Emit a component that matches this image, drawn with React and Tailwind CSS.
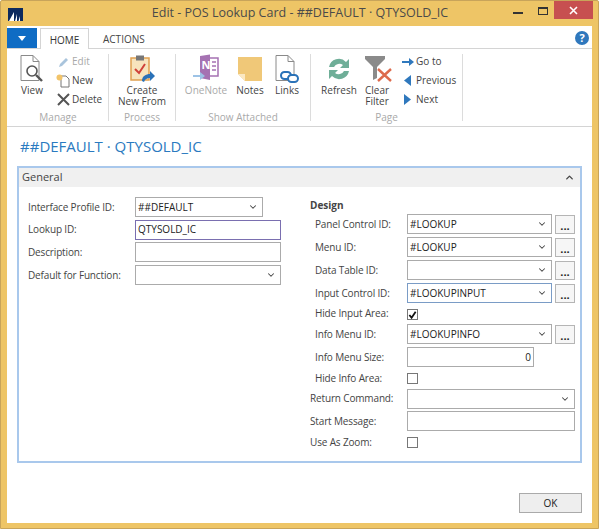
import { ChevronDown, ChevronUp } from 'lucide-react'

const font = { fontFamily: '"Open Sans", "Noto Sans", sans-serif' }

function Combo({ value, width = 'w-[145px]', active }) {
    return (
        <div
            className={`${width} h-[20px] flex items-center justify-between border bg-white pl-[2px] pr-[4px] text-[10px] text-[#222] ${
                active ? 'border-[#7a9cc6]' : 'border-[#ababab]'
            }`}
        >
            <span>{value}</span>
            <ChevronDown size={10} strokeWidth={2.5} className="text-[#444]" />
        </div>
    )
}

function TextBox({ value, width = 'w-[146px]', right, active }) {
    return (
        <div
            className={`${width} h-[20px] flex items-center border bg-white px-[2px] text-[10px] text-[#222] ${
                right ? 'justify-end pr-[2px]' : ''
            } ${active ? 'border-[#7a6fb0]' : 'border-[#ababab]'}`}
        >
            {value}
        </div>
    )
}

function DotsButton() {
    return (
        <div className="w-[20px] h-[19px] mt-[1px] flex items-end justify-center border border-[#b5b5b5] bg-[#f6f6f6] text-[11px] leading-[14px] font-bold text-[#222]">
            ...
        </div>
    )
}

function CheckBox({ checked, className = '' }) {
    return (
        <div className={`w-[11px] h-[11px] flex items-center justify-center border border-[#777] bg-white ${className}`}>
            {checked && (
                <svg width="10" height="10" viewBox="0 0 10 10">
                    <path d="M1.5 5 L4 8 L8.5 1.5" fill="none" stroke="#111" strokeWidth="2" />
                </svg>
            )}
        </div>
    )
}

function LeftRow({ label, children }) {
    return (
        <div className="h-[22.6px] flex items-center">
            <span className="w-[107px] text-[10px] tracking-[-0.15px] text-[#444]">{label}</span>
            {children}
        </div>
    )
}

function RightRow({ label, children, indent = true, dots, height = 'h-[23px]' }) {
    return (
        <div className={`${height} flex items-center`}>
            <span className={`w-[97px] text-[10px] tracking-[-0.15px] text-[#444] ${indent ? 'pl-[5px]' : ''}`}>
                {label}
            </span>
            {children}
            {dots && (
                <div className="ml-[3px]">
                    <DotsButton />
                </div>
            )}
        </div>
    )
}

function SmallAction({ icon, label, disabled }) {
    return (
        <div className={`h-[19px] flex items-center gap-[1px] text-[10px] ${disabled ? 'text-[#a9a9a9]' : 'text-[#444]'}`}>
            <span className="w-[15px] h-[15px] flex items-center justify-center">{icon}</span>
            <span>{label}</span>
        </div>
    )
}

function BigAction({ icon, label, disabled, width }) {
    return (
        <div className={`${width} flex flex-col items-center text-[10px] leading-[11px] text-center ${disabled ? 'text-[#a9a9a9]' : 'text-[#444]'}`}>
            <div className="h-[30px] flex items-center justify-center">{icon}</div>
            <div className="mt-[1px]">{label}</div>
        </div>
    )
}

function Group({ width, label, children }) {
    return (
        <div className={`${width} h-[67px] flex flex-col border-r border-[#dcdcdc]`}>
            <div className="flex-1 flex">{children}</div>
            <div className="text-center text-[10px] leading-[12px] text-[#a9a9a9] mb-[-2px]">{label}</div>
        </div>
    )
}

const ViewIcon = (
    <svg width="26" height="30" viewBox="0 0 26 30">
        <path d="M2 1.5 H14 L20 7.5 V26.5 H2 Z M14 1.5 V7.5 H20" fill="#fff" stroke="#8a8a8a" />
        <circle cx="13" cy="17" r="5" fill="#fff" stroke="#555" strokeWidth="1.6" />
        <path d="M17 21 L23 27" stroke="#555" strokeWidth="2.4" />
    </svg>
)
const ClipboardIcon = (
    <svg width="26" height="30" viewBox="0 0 26 30">
        <rect x="2" y="4" width="18" height="22" fill="#f7e4bd" stroke="#e0a050" strokeWidth="1.5" />
        <rect x="7" y="1.5" width="8" height="5" fill="#777" />
        <path d="M6 15 L10 19 L16 10" fill="none" stroke="#d0423a" strokeWidth="2" />
        <path d="M13 27 C13 22 17 20 21 20 V17 L26 22 L21 27 V24 C18 24 16 25 15 28 Z" fill="#2a72b8" />
    </svg>
)
const OneNoteIcon = (
    <svg width="28" height="30" viewBox="0 0 28 30">
        <path d="M8 2 L18 0.5 V26 L8 24 Z" fill="#a572b2" />
        <path d="M18 4 H26 V22 H18" fill="none" stroke="#a572b2" strokeWidth="1.5" />
        <path d="M20 8 H24 M20 12 H24 M20 16 H24" stroke="#a572b2" strokeWidth="1.5" />
        <text x="9.5" y="15" fontSize="11" fontWeight="700" fill="#fff">N</text>
        <path d="M1 21 H8 V18 L13 22 L8 26 V23 H1 Z" fill="#9dc3e6" />
    </svg>
)
const NotesIcon = (
    <svg width="26" height="26" viewBox="0 0 26 26">
        <path d="M1 1 H25 V25 H8 L1 18 Z" fill="#f0c878" />
        <path d="M1 18 H8 V25 Z" fill="#fbe8c2" />
    </svg>
)
const LinksIcon = (
    <svg width="26" height="30" viewBox="0 0 26 30">
        <path d="M2 1.5 H14 L20 7.5 V26.5 H2 Z M14 1.5 V7.5 H20" fill="#fff" stroke="#8a8a8a" />
        <rect x="7" y="18" width="10" height="7" rx="3.5" fill="#fff" stroke="#2a72b8" strokeWidth="2" />
        <rect x="14" y="21" width="10" height="7" rx="3.5" fill="#fff" stroke="#2a72b8" strokeWidth="2" />
    </svg>
)
const RefreshIcon = (
    <svg width="26" height="26" viewBox="0 0 26 26">
        <path d="M3 11 A10 10 0 0 1 20 6 L23 3 V12 H14 L17 9 A6 6 0 0 0 8 11 Z" fill="#6fae98" />
        <path d="M23 15 A10 10 0 0 1 6 20 L3 23 V14 H12 L9 17 A6 6 0 0 0 18 15 Z" fill="#6fae98" />
    </svg>
)
const ClearFilterIcon = (
    <svg width="30" height="30" viewBox="0 0 30 30">
        <path d="M3 2 H23 V5 L15 13 V24 L11 26 V13 L3 5 Z" fill="#8a8a8a" />
        <path d="M16 15 L29 27 M29 15 L16 27" stroke="#dd6b4d" strokeWidth="2.4" />
    </svg>
)

export default function App() {
    return (
        <div className="w-[600px] h-[530px] bg-white" style={font}>
            <div className="w-[599px] h-[529px] flex flex-col bg-[#eec566] border border-[#c8a45a] rounded-t-[2px]">
                <div className="h-[25px] flex items-center relative">
                    <div className="ml-[7px] w-[15px] h-[13px] mt-[1px] bg-[#0d2a5e] flex items-end justify-center">
                        <svg width="13" height="10" viewBox="0 0 13 10">
                            <path d="M0 10 L5 1 V10 Z M6 10 L8 3 V10 Z M9.5 10 L11 5 V10 Z" fill="#fff" />
                        </svg>
                    </div>
                    <div className="flex-1 text-center text-[12.5px] text-[#4a4a4a] pl-[64px]">
                        Edit - POS Lookup Card - ##DEFAULT · QTYSOLD_IC
                    </div>
                    <div className="flex items-start self-start">
                        <div className="w-[10px] h-[2px] mt-[11px] mr-[15px] bg-[#333]"></div>
                        <div className="w-[10px] h-[8px] mt-[6px] mr-[6px] border border-t-2 border-[#333]"></div>
                        <div className="w-[39px] h-[18px] bg-[#c75050] flex items-center justify-center text-white mr-[5px]">
                            <svg width="9" height="9" viewBox="0 0 9 9">
                                <path d="M1 1 L8 8 M8 1 L1 8" stroke="#fff" strokeWidth="1.6" />
                            </svg>
                        </div>
                    </div>
                </div>

                <div className="flex-1 mx-[6px] mb-[5px] bg-white flex flex-col">
                    <div className="h-[23px] flex items-end relative border-b border-[#d4d4d4]">
                        <div className="w-[30px] h-[20px] bg-[#0f6cc4] flex items-center justify-center">
                            <svg width="8" height="5" viewBox="0 0 8 5">
                                <path d="M0 0 H8 L4 5 Z" fill="#fff" />
                            </svg>
                        </div>
                        <div className="ml-[3px] w-[49px] h-[21px] mb-[-1px] pt-[3px] flex items-center justify-center border border-b-0 border-[#d4d4d4] bg-white text-[10px] text-[#333]">
                            HOME
                        </div>
                        <div className="ml-[14px] h-[20px] pt-[3px] flex items-center text-[10px] text-[#444]">ACTIONS</div>
                        <div className="ml-auto mr-[3px] mb-[3px] w-[14px] h-[14px] rounded-full bg-[#2f78bd] flex items-center justify-center text-[11px] font-bold text-white">
                            ?
                        </div>
                    </div>

                    <div className="h-[78px] flex pt-[5px] pl-[1px] border-b border-[#d4d4d4]">
                        <Group width="w-[101px]" label="Manage">
                            <BigAction width="w-[48px]" icon={ViewIcon} label="View" />
                            <div className="mt-[-2px]">
                                <SmallAction
                                    disabled
                                    label="Edit"
                                    icon={
                                        <svg width="12" height="12" viewBox="0 0 12 12">
                                            <path d="M1 11 L2 8 L8 2 L10 4 L4 10 Z" fill="#a9c4dc" />
                                        </svg>
                                    }
                                />
                                <SmallAction
                                    label="New"
                                    icon={
                                        <svg width="15" height="14" viewBox="0 0 15 14">
                                            <path d="M5 2 H10 L13 5 V13 H5 Z" fill="#fff" stroke="#777" />
                                            <circle cx="3.5" cy="3.5" r="3" fill="#f2c46a" />
                                        </svg>
                                    }
                                />
                                <SmallAction
                                    label="Delete"
                                    icon={
                                        <svg width="13" height="13" viewBox="0 0 13 13">
                                            <path d="M1 1 L12 12 M12 1 L1 12" stroke="#555" strokeWidth="2" />
                                        </svg>
                                    }
                                />
                            </div>
                        </Group>
                        <Group width="w-[67px]" label="Process">
                            <BigAction
                                width="w-[67px]"
                                icon={ClipboardIcon}
                                label={
                                    <>
                                        Create
                                        <br />
                                        New From
                                    </>
                                }
                            />
                        </Group>
                        <Group width="w-[135px]" label="Show Attached">
                            <BigAction disabled width="w-[60px]" icon={OneNoteIcon} label="OneNote" />
                            <BigAction width="w-[28px]" icon={NotesIcon} label="Notes" />
                            <BigAction width="w-[46px]" icon={LinksIcon} label="Links" />
                        </Group>
                        <Group width="w-[152px]" label="Page">
                            <BigAction width="w-[56px]" icon={RefreshIcon} label="Refresh" />
                            <BigAction
                                width="w-[20px]"
                                icon={ClearFilterIcon}
                                label={
                                    <>
                                        Clear
                                        <br />
                                        Filter
                                    </>
                                }
                            />
                            <div className="mt-[-2px] ml-[13px]">
                                <SmallAction
                                    label="Go to"
                                    icon={
                                        <svg width="12" height="10" viewBox="0 0 12 10">
                                            <path d="M0 4 H7 V1 L12 5 L7 9 V6 H0 Z" fill="#2f78bd" />
                                        </svg>
                                    }
                                />
                                <SmallAction
                                    label="Previous"
                                    icon={
                                        <svg width="9" height="11" viewBox="0 0 9 11">
                                            <path d="M8 0 V11 L1 5.5 Z" fill="#2f78bd" />
                                        </svg>
                                    }
                                />
                                <SmallAction
                                    label="Next"
                                    icon={
                                        <svg width="9" height="11" viewBox="0 0 9 11">
                                            <path d="M1 0 V11 L8 5.5 Z" fill="#2f78bd" />
                                        </svg>
                                    }
                                />
                            </div>
                        </Group>
                    </div>

                    <div className="flex-1 flex flex-col px-[10px]">
                        <div className="h-[39px] flex items-center pl-[3px] text-[15px] text-[#2a7ac0]">
                            ##DEFAULT · QTYSOLD_IC
                        </div>
                        <div className="h-[297px] border-2 border-[#a9c8ec] flex flex-col">
                            <div className="h-[19px] flex items-center justify-between bg-[#f0f0f0] px-[3px] text-[11px] text-[#444]">
                                <span>General</span>
                                <ChevronUp size={11} strokeWidth={3} className="mr-[2px] text-[#444]" />
                            </div>
                            <div className="flex pl-[9px] pt-[9px]">
                                <div className="w-[282px]">
                                    <LeftRow label="Interface Profile ID:">
                                        <Combo value="##DEFAULT" width="w-[128px]" />
                                    </LeftRow>
                                    <LeftRow label="Lookup ID:">
                                        <TextBox value="QTYSOLD_IC" active />
                                    </LeftRow>
                                    <LeftRow label="Description:">
                                        <TextBox />
                                    </LeftRow>
                                    <LeftRow label="Default for Function:">
                                        <Combo value="" width="w-[146px]" />
                                    </LeftRow>
                                </div>
                                <div className="w-[266px]">
                                    <div className="h-[16.5px] pt-[3px] flex items-center text-[10px] font-bold text-[#444]">Design</div>
                                    <RightRow label="Panel Control ID:" dots>
                                        <Combo value="#LOOKUP" />
                                    </RightRow>
                                    <RightRow label="Menu ID:" dots>
                                        <Combo value="#LOOKUP" />
                                    </RightRow>
                                    <RightRow label="Data Table ID:" dots>
                                        <Combo value="" />
                                    </RightRow>
                                    <RightRow label="Input Control ID:" dots>
                                        <Combo value="#LOOKUPINPUT" active />
                                    </RightRow>
                                    <RightRow label="Hide Input Area:" height="h-[18px]">
                                        <CheckBox checked className="mt-[2px]" />
                                    </RightRow>
                                    <RightRow label="Info Menu ID:" dots>
                                        <Combo value="#LOOKUPINFO" />
                                    </RightRow>
                                    <RightRow label="Info Menu Size:">
                                        <TextBox value="0" right width="w-[127px]" />
                                    </RightRow>
                                    <RightRow label="Hide Info Area:" height="h-[19px]">
                                        <CheckBox />
                                    </RightRow>
                                    <RightRow label="Return Command:" indent={false} height="h-[22.5px]">
                                        <Combo value="" width="w-[168px]" />
                                    </RightRow>
                                    <RightRow label="Start Message:" indent={false} height="h-[22.5px]">
                                        <TextBox width="w-[168px]" />
                                    </RightRow>
                                    <RightRow label="Use As Zoom:" indent={false} height="h-[19px]">
                                        <CheckBox />
                                    </RightRow>
                                </div>
                            </div>
                        </div>
                        <div className="flex justify-end pt-[30px]">
                            <div className="w-[63px] h-[20px] flex items-center justify-center border border-[#aaa] bg-[#eeeeee] text-[10px] text-[#222]">
                                OK
                            </div>
                        </div>
                    </div>
                </div>
            </div>
        </div>
    )
}
